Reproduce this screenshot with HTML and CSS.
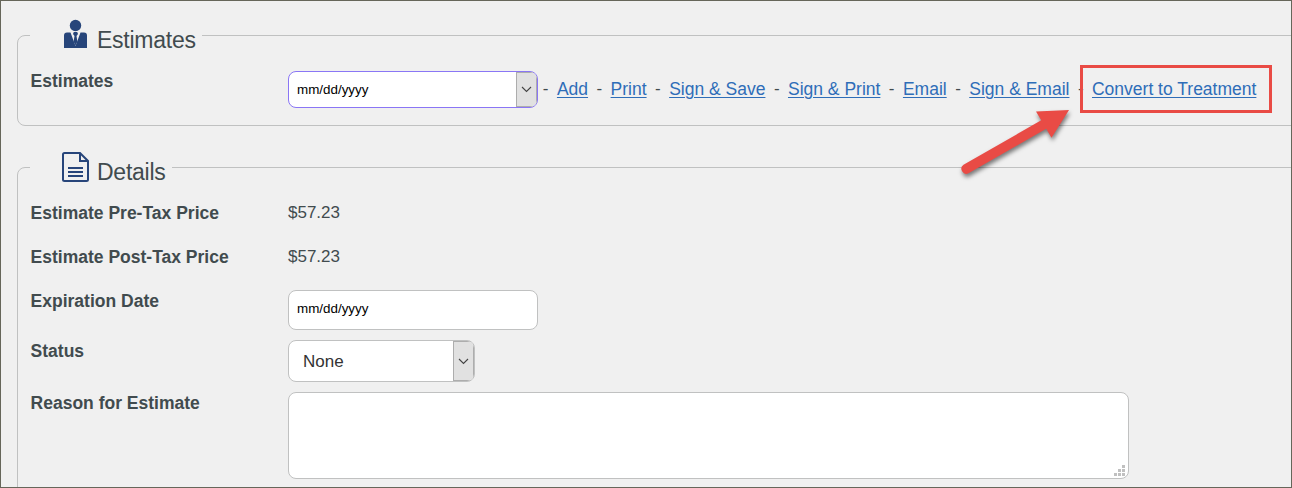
FILE: index.html
```html
<!DOCTYPE html>
<html lang="en">

<head>
    <meta charset="utf-8">
    <title>Estimates</title>
    <link rel="stylesheet" href="styles.css">
</head>

<body>
    <main class="page">
        <fieldset class="section">
            <legend class="section-title">
                <svg class="icon" width="34" height="34" viewBox="0 0 34 34" fill="#27457a">
                    <circle cx="14.5" cy="8.500" r="5.700" />
                    <path d="M3 31V18.500q0-3 3-3h3.500l5 13.500 5-13.500H23q3 0 3 3V31z" />
                    <path d="M12.800 15h3.400l.8 2-1.500 2 .9 5.500-1.900 4-1.900-4 .9-5.500-1.500-2z" />
                </svg>
                <span>Estimates</span>
            </legend>
            <div class="row">
                <label class="label" for="estimate">Estimates</label>
                <div class="actions">
                    <div class="select select-date">
                        <select id="estimate">
                            <option>mm/dd/yyyy</option>
                        </select>
                        <span class="arrow"><svg width="11" height="7" viewBox="0 0 11 7"><path d="M1 1l4.500 4.500L10 1" /></svg></span>
                    </div>
                    <span class="dash">-</span>
                    <a href="#">Add</a>
                    <span class="dash">-</span>
                    <a href="#">Print</a>
                    <span class="dash">-</span>
                    <a href="#">Sign &amp; Save</a>
                    <span class="dash">-</span>
                    <a href="#">Sign &amp; Print</a>
                    <span class="dash">-</span>
                    <a href="#">Email</a>
                    <span class="dash">-</span>
                    <a href="#">Sign &amp; Email</a>
                    <span class="dash">-</span>
                    <a href="#" class="convert">Convert to Treatment</a>
                </div>
            </div>
        </fieldset>

        <fieldset class="section details">
            <legend class="section-title">
                <svg class="icon" width="34" height="34" viewBox="0 0 34 34" fill="none" stroke="#27457a" stroke-width="2">
                    <path d="M3.500 4H19l8 8v18.500q0 1.500-1.500 1.500h-22Q2 32 2 30.500v-25Q2 4 3.500 4zM19 4v8h8" />
                    <path d="M7 19h15M7 23h15M7 27h15" />
                </svg>
                <span>Details</span>
            </legend>
            <div class="row">
                <span class="label">Estimate Pre-Tax Price</span>
                <span class="value">$57.23</span>
            </div>
            <div class="row">
                <span class="label">Estimate Post-Tax Price</span>
                <span class="value">$57.23</span>
            </div>
            <div class="row">
                <label class="label" for="expiration">Expiration Date</label>
                <input class="date" id="expiration" type="text" value="mm/dd/yyyy">
            </div>
            <div class="row">
                <label class="label" for="status">Status</label>
                <div class="select select-status">
                    <select id="status">
                        <option>None</option>
                    </select>
                    <span class="arrow"><svg width="11" height="7" viewBox="0 0 11 7"><path d="M1 1l4.500 4.500L10 1" /></svg></span>
                </div>
            </div>
            <div class="row">
                <label class="label" for="reason">Reason for Estimate</label>
                <div class="reason">
                    <textarea id="reason"></textarea>
                    <svg class="grip" width="11" height="11" viewBox="0 0 11 11" fill="#c0c0c0">
                        <path d="M8 0h3v3H8zM4 4h3v3H4zM8 4h3v3H8zM0 8h3v3H0zM4 8h3v3H4zM8 8h3v3H8z" />
                    </svg>
                </div>
            </div>
        </fieldset>

        <svg class="pointer" width="130" height="90" viewBox="0 0 130 90" fill="#e94b45">
            <path d="M119 10L86 11.500l5.200 8.800-77.700 44.400a5 5 0 0 0 5 8.600l77.700-44.500 5.300 9z" />
        </svg>
    </main>
</body>

</html>
```

FILE: styles.css
```css
* {
    box-sizing: border-box;
}

body {
    margin: 0;
    background: #f0f0f0;
    color: #414b4e;
    font-family: "Liberation Sans", Arial, sans-serif;
    font-size: 17.5px;
    line-height: 20px;
}

.page {
    position: relative;
    height: 488px;
    padding: 9px 0 0 16px;
    border: 1px solid #66665a;
    overflow: hidden;
}

.section {
    width: 1300px;
    margin: 0 0 16px;
    padding: 10px 12px 17px;
    border: 1px solid #c0c1c1;
    border-radius: 8px;
}

.details {
    padding-top: 9px;
    padding-bottom: 40px;
}

.section-title {
    display: flex;
    height: 51px;
    padding: 7px 6px 0 31px;
    font-size: 23px;
    line-height: 47px;
    letter-spacing: -0.25px;
}

.icon {
    margin-right: 2px;
}

.row {
    display: grid;
    grid-template-columns: 258px 1fr;
    align-items: start;
}

.row + .row {
    margin-top: 10px;
}

.label {
    padding-left: 0.6px;
    font-weight: bold;
}

.details .label {
    padding-top: 1px;
}

.value {
    height: 34px;
    padding-top: 1px;
    font-size: 17px;
}

.actions {
    display: flex;
    align-items: center;
    white-space: nowrap;
}

.actions a {
    margin-bottom: 2px;
    color: #2e6db8;
    text-decoration: underline;
    text-underline-offset: 2px;
    text-decoration-thickness: 1px;
}

.dash {
    margin: 0 8.45px 1px;
    font-size: 17px;
}

.select + .dash {
    margin-left: 4.8px;
}

.convert {
    position: relative;
}

/* red frame around the convert link */
.convert::after {
    content: "";
    position: absolute;
    top: -14px;
    left: -12px;
    box-sizing: border-box;
    width: 192px;
    height: 48px;
    border: 3px solid #e94b45;
}

.select,
.date,
textarea {
    background: #fff;
    border: 1px solid #c0c1c1;
    border-radius: 8px;
}

.select {
    display: flex;
    overflow: hidden;
}

select {
    flex: 1;
    appearance: none;
    border: 0;
    background: none;
    font-family: inherit;
}

.arrow {
    display: flex;
    align-items: center;
    justify-content: center;
    width: 21px;
    background: #e1e1e1;
    border: 1px solid #adadad;
}

.arrow path {
    fill: none;
    stroke: #444;
    stroke-width: 1.1;
}

.select-date {
    width: 250px;
    height: 37px;
    border-color: #8a76f5;
}

.select-date select {
    padding: 0 8px;
    color: #000;
    font-size: 13.4px;
}

.select-status {
    width: 187px;
    height: 42px;
}

.select-status select {
    padding: 0 14px;
    color: #333;
    font-size: 17px;
}

.date {
    width: 250px;
    height: 40px;
    padding: 0 8px 3px;
    color: #000;
    font-family: inherit;
    font-size: 13.4px;
}

.reason {
    position: relative;
    width: 841px;
    height: 87px;
}

textarea {
    display: block;
    width: 100%;
    height: 100%;
    resize: none;
}

.grip {
    position: absolute;
    right: 4px;
    bottom: 3px;
}

.pointer {
    position: absolute;
    top: 99px;
    left: 949px;
    filter: drop-shadow(1px 3px 2px rgba(0, 0, 0, 0.5));
}
```
